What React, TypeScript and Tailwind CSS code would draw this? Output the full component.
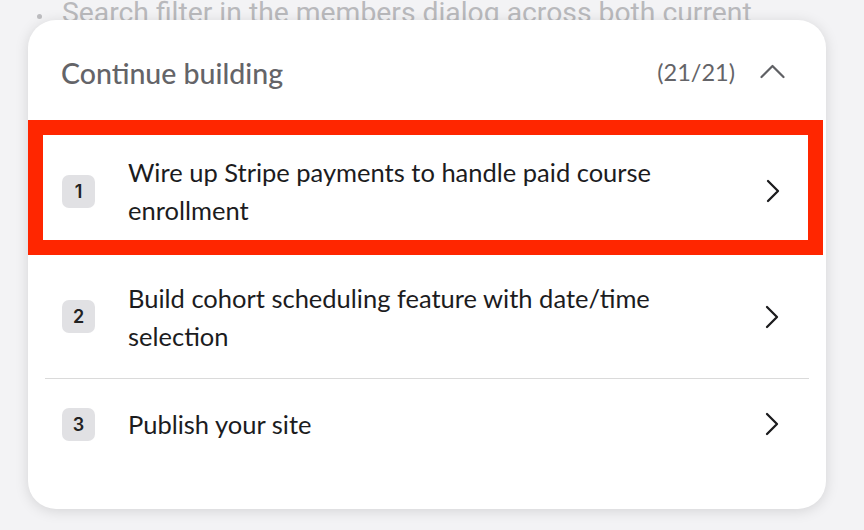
import React from "react";

function ChevronRight() {
  return (
    <svg width="14" height="24" viewBox="0 0 14 24" fill="none" className="shrink-0">
      <polyline points="2,2 12,12 2,22" stroke="#1c1c1e" strokeWidth="2.3" strokeLinecap="round" strokeLinejoin="round" />
    </svg>
  );
}

function ChevronUp() {
  return (
    <svg width="25" height="15" viewBox="0 0 25 15" fill="none">
      <polyline points="1.5,13 12.5,2 23.5,13" stroke="#5f6064" strokeWidth="2.2" strokeLinecap="round" strokeLinejoin="round" />
    </svg>
  );
}

function Badge({ n }: { n: number }) {
  return (
    <div className="w-[33px] h-[33px] shrink-0 rounded-[7px] bg-[#e1e1e4] flex items-center justify-center text-[18px] font-semibold text-[#222]" style={{ fontFamily: "Inter, sans-serif" }}>
      {n}
    </div>
  );
}

export default function App() {
  const font = { fontFamily: "Lato, 'Noto Sans', sans-serif" } as React.CSSProperties;
  return (
    <div className="w-[864px] h-[530px] overflow-hidden bg-[#f3f3f5]" style={font}>
      <div className="flex items-center pl-[37px] text-[28.3px] leading-[30px] text-[#b9b9bc] whitespace-nowrap -mt-[2px]" style={{ fontFamily: "Roboto, sans-serif" }}>
        <span className="w-[5px] h-[5px] rounded-full bg-[#bdbdc0] mr-[20px] mt-[6px]" />
        <span>Search filter in the members dialog across both current</span>
      </div>
      <div className="relative z-10 ml-[28px] -mt-[8px] w-[798px] h-[489px] bg-white rounded-[28px] shadow-[0_2px_14px_rgba(0,0,0,0.13)] flex flex-col">
        <div className="h-[100px] flex items-center pt-[6px] pl-[33px] pr-[41px]">
          <span className="text-[28.5px] font-medium text-[#646468]">Continue building</span>
          <span className="ml-auto text-[23.5px] text-[#646468]">(21/21)</span>
          <span className="ml-[25px] mb-[4px]"><ChevronUp /></span>
        </div>
        <div className="w-[795px] h-[135px] border-[15px] border-[#ff2600] flex items-center pt-[7px] pl-[19px] pr-[28px]">
          <Badge n={1} />
          <div className="ml-[33px] w-[580px] text-[25.5px] leading-[38px] text-[#1c1c1e]">
            Wire up Stripe payments to handle paid course enrollment
          </div>
          <span className="ml-auto"><ChevronRight /></span>
        </div>
        <div className="mx-[17px] h-[124px] border-b border-[#dadada] flex items-center pl-[17px] pr-[30px]">
          <Badge n={2} />
          <div className="ml-[33px] w-[580px] text-[25.5px] leading-[38px] text-[#1c1c1e]">
            Build cohort scheduling feature with date/time selection
          </div>
          <span className="ml-auto"><ChevronRight /></span>
        </div>
        <div className="mx-[17px] h-[90px] flex items-center pl-[17px] pr-[30px]">
          <Badge n={3} />
          <div className="ml-[33px] w-[580px] text-[25.5px] leading-[38px] text-[#1c1c1e]">
            Publish your site
          </div>
          <span className="ml-auto"><ChevronRight /></span>
        </div>
      </div>
    </div>
  );
}
